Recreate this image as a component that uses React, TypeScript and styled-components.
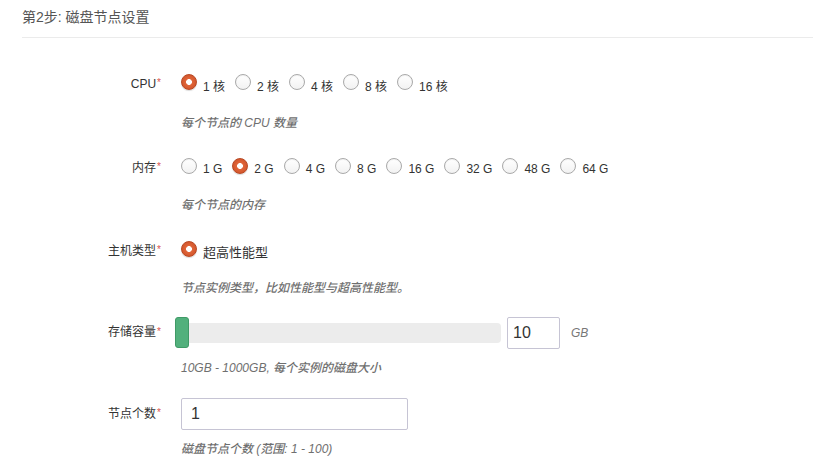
import React from "react";
import styled, { createGlobalStyle } from "styled-components";

const GlobalStyle = createGlobalStyle`
  html, body { margin: 0; padding: 0; background: #fff; }
  body {
    font-family: "Liberation Sans", "Noto Sans CJK SC", Arial, sans-serif;
    color: #333;
  }
  * { box-sizing: border-box; }
`;

const Page = styled.div`
  width: 813px;
  padding: 7px 0 0 22px;
`;

const Title = styled.div`
  font-size: 14px;
  line-height: 20px;
  color: #555;
  padding-bottom: 10px;
  border-bottom: 1px solid #ebebeb;
  margin-bottom: 28px;
`;

const Form = styled.div`
  display: flex;
  flex-direction: column;
`;

const Group = styled.div<{ $mb?: number }>`
  display: grid;
  grid-template-columns: 139px 1fr;
  column-gap: 20px;
  margin-bottom: ${(p) => p.$mb ?? 18}px;
`;

const Label = styled.div<{ $h: number }>`
  grid-column: 1;
  text-align: right;
  font-size: 12px;
  color: #333;
  height: ${(p) => p.$h}px;
  line-height: ${(p) => p.$h}px;
`;

const Star = styled.span`
  color: #d9534f;
  font-size: 10px;
  margin-left: 1px;
  vertical-align: top;
  position: relative;
  top: -1px;
`;

const Control = styled.div<{ $h: number }>`
  grid-column: 2;
  display: flex;
  align-items: center;
  height: ${(p) => p.$h}px;
`;

const Help = styled.div<{ $mt?: number }>`
  grid-column: 2;
  margin-top: ${(p) => p.$mt ?? 9}px;
  font-size: 12px;
  line-height: 20px;
  font-style: italic;
  font-weight: 500;
  color: #6f6f6f;
`;

const RadioGroup = styled.div`
  display: flex;
  align-items: center;
  gap: 10px;
`;

const Option = styled.label`
  display: flex;
  align-items: center;
  gap: 6px;
  font-size: 12px;
  color: #333;
  cursor: pointer;
`;

const Dot = styled.span<{ $checked: boolean }>`
  width: 16px;
  height: 16px;
  border-radius: 50%;
  flex: none;
  position: relative;
  top: -2px;
  border: 1px solid ${(p) => (p.$checked ? "#b84823" : "#a9a9a9")};
  background: ${(p) =>
    p.$checked
      ? "radial-gradient(circle at 50% 50%, #fff 0 2.6px, #e0663a 3.2px, #d4572d 70%, #c24a24 100%)"
      : "linear-gradient(#fff, #f2f2f2)"};
  box-shadow: ${(p) => (p.$checked ? "0 1px 1px rgba(0,0,0,0.15)" : "inset 0 1px 1px rgba(0,0,0,0.06)")};
`;

const OptText = styled.span`
  position: relative;
  top: 1px;
`;

const HostText = styled.span`
  font-size: 13px;
  color: #333;
`;

const SliderRow = styled.div`
  display: flex;
  align-items: center;
  margin-left: -6px;
`;

const Track = styled.div`
  position: relative;
  width: 326px;
  height: 20px;
  border-radius: 4px;
  background: #ececec;
`;

const Handle = styled.div`
  position: absolute;
  left: 0;
  top: -6px;
  width: 14px;
  height: 31px;
  border-radius: 3px;
  background: #52b07c;
  border: 1px solid #3f9a66;
`;

const Input = styled.input<{ $w: number }>`
  width: ${(p) => p.$w}px;
  height: 32px;
  border: 1px solid #c6c4d4;
  border-radius: 2px;
  padding: 0 9px;
  font-family: "Liberation Sans", Arial, sans-serif;
  font-size: 16px;
  color: #333;
  background: #fff;
  outline: none;
`;

const SmallInput = styled(Input)`
  margin-left: 6px;
  padding: 0 5px;
`;

const Unit = styled.span`
  margin-left: 11px;
  font-size: 12px;
  font-style: italic;
  color: #777;
`;

function Req({ children, h }: { children: React.ReactNode; h: number }) {
  return (
    <Label $h={h}>
      {children}
      <Star>*</Star>
    </Label>
  );
}

function Radios({ items, checked }: { items: string[]; checked: number }) {
  return (
    <RadioGroup>
      {items.map((t, i) => (
        <Option key={t}>
          <Dot $checked={i === checked} />
          <OptText>{t}</OptText>
        </Option>
      ))}
    </RadioGroup>
  );
}

export default function App() {
  return (
    <>
      <GlobalStyle />
      <Page>
        <Title>第2步: 磁盘节点设置</Title>
        <Form>
          <Group $mb={17}>
            <Req h={36}>CPU</Req>
            <Control $h={36}>
              <Radios items={["1 核", "2 核", "4 核", "8 核", "16 核"]} checked={0} />
            </Control>
            <Help $mt={11}>每个节点的 CPU 数量</Help>
          </Group>
          <Group>
            <Req h={36}>内存</Req>
            <Control $h={36}>
              <Radios
                items={["1 G", "2 G", "4 G", "8 G", "16 G", "32 G", "48 G", "64 G"]}
                checked={1}
              />
            </Control>
            <Help>每个节点的内存</Help>
          </Group>
          <Group>
            <Req h={36}>主机类型</Req>
            <Control $h={36}>
              <Option>
                <Dot $checked />
                <HostText>超高性能型</HostText>
              </Option>
            </Control>
            <Help>节点实例类型，比如性能型与超高性能型。</Help>
          </Group>
          <Group $mb={20}>
            <Req h={33}>存储容量</Req>
            <Control $h={33}>
              <SliderRow>
                <Track>
                  <Handle />
                </Track>
                <SmallInput $w={53} defaultValue="10" />
                <Unit>GB</Unit>
              </SliderRow>
            </Control>
            <Help>10GB - 1000GB, 每个实例的磁盘大小</Help>
          </Group>
          <Group>
            <Req h={32}>节点个数</Req>
            <Control $h={32}>
              <Input $w={227} defaultValue="1" />
            </Control>
            <Help>磁盘节点个数 (范围: 1 - 100)</Help>
          </Group>
        </Form>
      </Page>
    </>
  );
}
